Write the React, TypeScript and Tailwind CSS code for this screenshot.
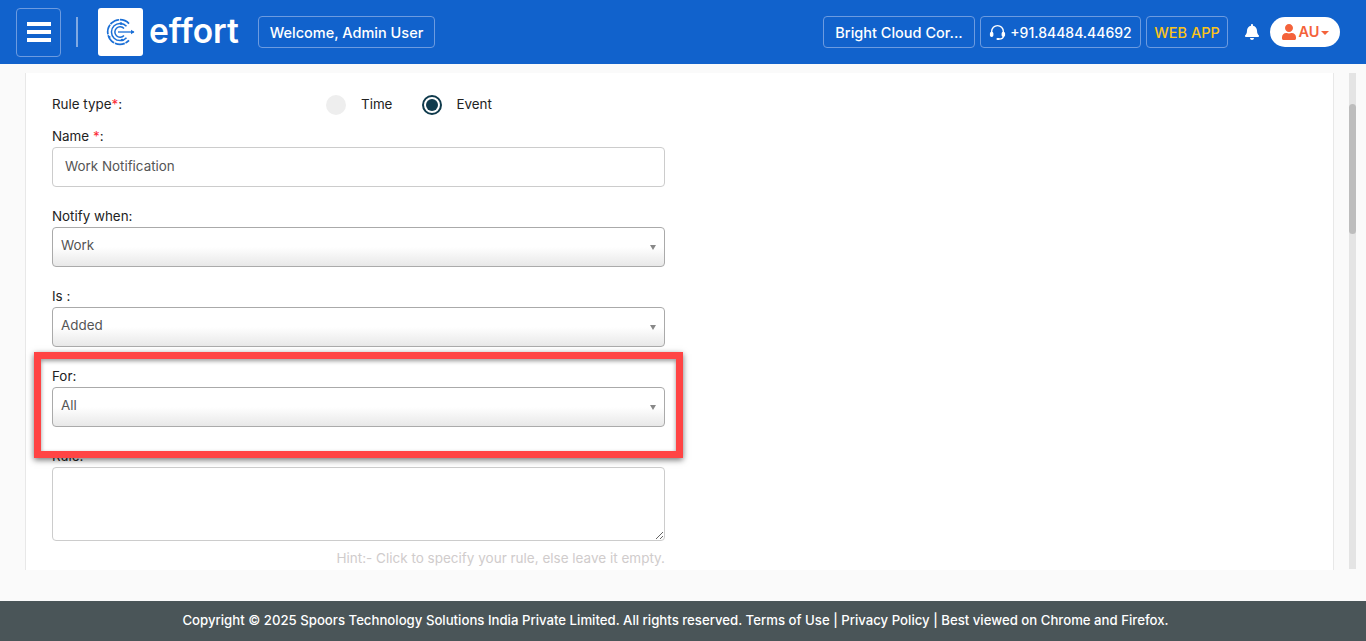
import React from 'react';
import { FaBell, FaUser } from 'react-icons/fa';

const font = "font-['Inter','Liberation_Sans',sans-serif]";

const HeaderBox: React.FC<{ className?: string; children: React.ReactNode }> = ({ className, children }) => (
    <div className={`flex h-8 items-center justify-center rounded border border-[#6c9be0] pt-px text-[14.5px] font-medium ${className ?? ''}`}>
        {children}
    </div>
);

const LogoMark = () => (
    <svg width="32" height="32" viewBox="0 0 32 32" fill="none" stroke="#1a6fd6" className="-mt-px">
        <path d="M24 7.6A12.3 12.3 0 1 0 24 24.4" strokeWidth="1.7" strokeDasharray="10 0.8" />
        <path d="M21.5 10.3A8.6 8.6 0 1 0 21.5 21.7" strokeWidth="1.5" />
        <path d="M19 12.6A5.2 5.2 0 1 0 19 19.4" strokeWidth="1.5" />
        <path d="M13 16H29" strokeWidth="1.3" />
        <path d="M26 13.8 29.5 16 26 18.2Z" fill="#1a6fd6" strokeWidth="0" />
        <circle cx="16" cy="7.6" r="1.3" fill="#1a6fd6" strokeWidth="0" />
        <circle cx="17" cy="24" r="1.3" fill="#1a6fd6" strokeWidth="0" />
        <circle cx="4.5" cy="21" r="1.1" fill="#1a6fd6" strokeWidth="0" />
    </svg>
);

const Header = () => (
    <header className="flex h-16 items-center bg-[#1162cc] pl-4 pr-[26px]">
        <button className="flex h-[49px] w-[45px] flex-col items-center justify-center gap-[4px] rounded border border-[#6c9be0]">
            <span className="h-1 w-6 bg-white" />
            <span className="h-1 w-6 bg-white" />
            <span className="h-1 w-6 bg-white" />
        </button>
        <div className="ml-[15px] h-[30px] w-[2px] bg-[#7fa9e3]" />
        <div className="ml-[20px] flex h-12 w-[45px] items-center justify-center rounded-[3px] bg-white">
            <LogoMark />
        </div>
        <span className="ml-[6px] w-[90px] text-[33.5px] font-semibold leading-none text-white">effort</span>
        <HeaderBox className="ml-[19px] w-[177px] text-white">Welcome, Admin User</HeaderBox>
        <HeaderBox className="ml-auto w-[152px] text-white">Bright Cloud Cor...</HeaderBox>
        <HeaderBox className="ml-[5px] w-[161px] gap-1 text-white">
            <svg width="17" height="17" viewBox="0 0 16 16" fill="none" stroke="white" strokeWidth="1.3">
                <path d="M2.5 9V7a5.5 5.5 0 0 1 11 0v2" />
                <rect x="1.5" y="8" width="2" height="3.6" rx="1" fill="white" />
                <rect x="12.5" y="8" width="2" height="3.6" rx="1" fill="white" />
                <path d="M13.5 11.5c0 1.8-1.5 2.6-4 2.6" />
                <rect x="7" y="13.2" width="3" height="1.8" rx="0.9" fill="white" stroke="none" />
            </svg>
            <span className="text-[14px]">+91.84484.44692</span>
        </HeaderBox>
        <HeaderBox className="ml-[5px] w-[82px] text-[#fcc419]">WEB APP</HeaderBox>
        <FaBell className="ml-[16px] text-[16px] text-white" />
        <div className="ml-[10px] flex h-[30px] w-[70px] items-center justify-center gap-[2px] rounded-full bg-white text-[14.5px] font-semibold text-[#f4623a]">
            <FaUser className="text-[16px]" />
            <span>AU</span>
            <span className="mt-[2px] h-0 w-0 border-x-[4px] border-t-[4px] border-x-transparent border-t-[#f4623a]" />
        </div>
    </header>
);

const SelectField: React.FC<{ label: string; value: string }> = ({ label, value }) => (
    <div className="mb-5">
        <label className="-mt-px mb-px block h-5 text-[13.4px] leading-5 text-[#222]">{label}</label>
        <div className="flex h-10 w-[613px] items-center justify-between rounded-[4px] border border-[#aaa] bg-gradient-to-b from-white from-50% to-[#e8e8e8] pb-[4px] pl-[8px] pr-[8px] text-[13.4px] text-[#555]">
            <span>{value}</span>
            <span className="mt-[4px] h-0 w-0 border-x-[3px] border-t-[5px] border-x-transparent border-t-[#888]" />
        </div>
    </div>
);

const App = () => (
    <div className={`flex h-[641px] flex-col overflow-hidden bg-[#fafafa] ${font}`}>
        <Header />
        <main className="relative flex h-[537px] pt-[9px]">
            <section className="ml-[25px] h-[497px] w-[1309px] overflow-hidden border-x border-[#e8e8e8] bg-white pl-[26px] pt-[15px]">
                <div className="flex h-[39px] items-start text-[13.4px] text-[#222]">
                    <div className="flex h-[32px] w-[274px] items-center">
                        Rule type<span className="text-red-500">*</span>:
                    </div>
                    <div className="flex h-[32px] items-center">
                        <span className="mt-[2px] h-5 w-5 rounded-full bg-[#eeeeee]" />
                        <span className="ml-[15px]">Time</span>
                        <span className="ml-[30px] mt-[2px] flex h-5 w-5 items-center justify-center rounded-full border-[2px] border-[#0f3a4c] bg-white">
                            <span className="h-3 w-3 rounded-full bg-[#0f3a4c]" />
                        </span>
                        <span className="ml-[14px]">Event</span>
                    </div>
                </div>
                <div className="mb-5">
                    <label className="-mt-px mb-px block h-5 text-[13.4px] leading-5 text-[#222]">
                        Name <span className="text-red-500">*</span>:
                    </label>
                    <div className="flex h-10 w-[613px] items-center rounded-[4px] border border-[#ccc] bg-white pb-[2px] pl-[12px] text-[13.4px] text-[#555]">
                        Work Notification
                    </div>
                </div>
                <SelectField label="Notify when:" value="Work" />
                <SelectField label="Is :" value="Added" />
                <SelectField label="For:" value="All" />
                <label className="-mt-px mb-px block h-5 text-[13.4px] leading-5 text-[#222]">Rule:</label>
                <textarea className="block h-[74px] w-[613px] rounded-[4px] border border-[#ccc] bg-white" />
                <p className="mt-[7px] w-[613px] text-right text-[13.5px] text-[#d0cccc]">Hint:- Click to specify your rule, else leave it empty.</p>
            </section>
            <div className="ml-[15px] h-[496px] w-[7px] bg-[#e4e4e4] pt-[31px]">
                <div className="h-[130px] rounded-full bg-[#bdbdbd]" />
            </div>
            {/* red callout round the For field */}
            <div className="absolute left-[34px] top-[288px] h-[106px] w-[649px] border-[7px] border-[#ff4444] shadow-[0_2px_6px_rgba(0,0,0,0.55),inset_0_2px_4px_rgba(0,0,0,0.4)]" />
        </main>
        <footer className="flex h-10 items-center justify-center bg-[#4a5558] pr-[15px] text-[13.2px] font-medium text-white">
            Copyright © 2025 Spoors Technology Solutions India Private Limited. All rights reserved. Terms of Use | Privacy Policy | Best viewed on Chrome and Firefox.
        </footer>
    </div>
);

export default App;
